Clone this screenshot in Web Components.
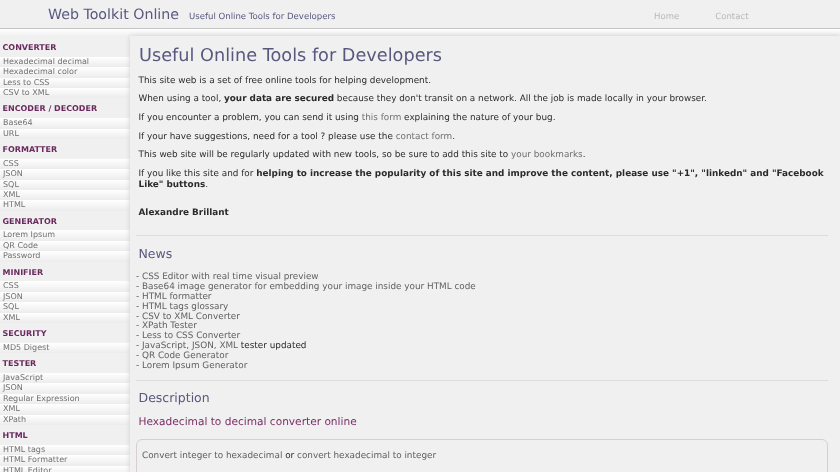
<!DOCTYPE html>
<html>
<head>
<meta charset="utf-8">
<title>Web Toolkit Online</title>
<style>
html,body{margin:0;padding:0;height:472px;overflow:hidden;background:#f0f0f0;font-family:"DejaVu Sans",sans-serif;text-rendering:geometricPrecision;}
body{filter:blur(.3px);}
</style>
</head>
<body>
<site-header></site-header>
<page-layout>
  <side-menu slot="side">
    <menu-group title="CONVERTER" items="Hexadecimal decimal|Hexadecimal color|Less to CSS|CSV to XML"></menu-group>
    <menu-group title="ENCODER / DECODER" items="Base64|URL"></menu-group>
    <menu-group title="FORMATTER" items="CSS|JSON|SQL|XML|HTML"></menu-group>
    <menu-group title="GENERATOR" items="Lorem Ipsum|QR Code|Password"></menu-group>
    <menu-group title="MINIFIER" items="CSS|JSON|SQL|XML"></menu-group>
    <menu-group title="SECURITY" items="MD5 Digest"></menu-group>
    <menu-group title="TESTER" items="JavaScript|JSON|Regular Expression|XML|XPath"></menu-group>
    <menu-group title="HTML" items="HTML tags|HTML Formatter|HTML Editor"></menu-group>
  </side-menu>
  <main-panel></main-panel>
</page-layout>
<script>
//header bar
var header_tpl = document.createElement("template");
header_tpl.innerHTML = `
<style>
:host{display:flex;align-items:center;height:28px;border-bottom:1px solid #c4c4c4;background:#f0f0f0;}
.brand{font-size:14.2px;color:#58587f;margin-left:48px;position:relative;top:.5px;}
.tag{font-size:8.55px;color:#58587f;margin-left:10px;position:relative;top:2.5px;}
nav{margin-left:auto;display:flex;gap:36px;margin-right:91.5px;font-size:8.55px;color:#b8b8b8;position:relative;top:3px;}
</style>
<span class="brand">Web Toolkit Online</span>
<span class="tag">Useful Online Tools for Developers</span>
<nav><span>Home</span><span>Contact</span></nav>
`;
class SiteHeader extends HTMLElement {
  constructor(){
    super();
    this.attachShadow({mode:"open"}).appendChild(header_tpl.content.cloneNode(true));
  }
}
customElements.define("site-header", SiteHeader);

//two columns, with the light band under the header
var layout_tpl = document.createElement("template");
layout_tpl.innerHTML = `
<style>
:host{display:flex;align-items:flex-start;padding-top:7px;background:linear-gradient(#ffffff,#f0f0f0) no-repeat 0 0/100% 7px;}
.side{width:130px;flex:none;}
.main{flex:1;min-width:0;}
</style>
<div class="side"><slot name="side"></slot></div>
<div class="main"><slot></slot></div>
`;
class PageLayout extends HTMLElement {
  constructor(){
    super();
    this.attachShadow({mode:"open"}).appendChild(layout_tpl.content.cloneNode(true));
  }
}
customElements.define("page-layout", PageLayout);

var side_tpl = document.createElement("template");
side_tpl.innerHTML = `
<style>
:host{display:block;padding-top:6px;}
</style>
<slot></slot>
`;
class SideMenu extends HTMLElement {
  constructor(){
    super();
    this.attachShadow({mode:"open"}).appendChild(side_tpl.content.cloneNode(true));
  }
}
customElements.define("side-menu", SideMenu);

var group_tpl = document.createElement("template");
group_tpl.innerHTML = `
<style>
:host{display:block;margin-bottom:5px;}
h4{margin:0;padding:0 0 3.8px 2.5px;font-size:8px;line-height:11px;font-weight:bold;color:#6b2a5e;}
a{display:block;height:10.4px;line-height:10.4px;padding-left:3px;font-size:8px;color:#707070;background:linear-gradient(#ffffff,#ececec);white-space:nowrap;}
</style>
<h4></h4>
<div class="items"></div>
`;
class MenuGroup extends HTMLElement {
  constructor(){
    super();
    this.attachShadow({mode:"open"}).appendChild(group_tpl.content.cloneNode(true));
  }
  connectedCallback(){
    this.shadowRoot.querySelector("h4").textContent = this.getAttribute("title");
    var box = this.shadowRoot.querySelector(".items");
    box.innerHTML = "";
    this.getAttribute("items").split("|").forEach(function(t){
      var a = document.createElement("a");
      a.textContent = t;
      box.appendChild(a);
    });
  }
}
customElements.define("menu-group", MenuGroup);

var main_tpl = document.createElement("template");
main_tpl.innerHTML = `
<style>
:host{display:block;height:440px;overflow:hidden;box-shadow:0 0 5px #cfcfcf;background:#f0f0f0;padding:0 12px 0 6px;font-size:8.86px;color:#2b2b2b;line-height:11px;}
h1{margin:9px 0 8.8px 3px;font-size:17.7px;line-height:22px;font-weight:normal;color:#58587f;}
p{margin:0 0 7.6px 2.5px;}
.link{color:#6f6f6f;}
.sign{margin-top:17px;margin-bottom:16.5px;}
hr{border:0;border-top:1px solid #dcdcdc;margin:0;}
h2{margin:10px 0 11px 2.5px;font-size:12.5px;line-height:16px;font-weight:normal;color:#58587f;}
h2.desc{margin:9.5px 0 8.5px 2.5px;}
.news{color:#5f5f5f;line-height:9.83px;}
.news b{font-weight:normal;color:#2b2b2b;}
.news hr{margin:8px 0 0;}
h3{margin:0 0 0 2.5px;font-size:10.6px;line-height:14px;font-weight:normal;color:#7a2f66;}
.box{margin-top:10px;border:1px solid #d9ccd4;border-radius:6px;padding:11.5px 5px;height:60px;color:#5f5f5f;}
.box b{font-weight:normal;color:#2b2b2b;}
</style>
<h1>Useful Online Tools for Developers</h1>
<p>This site web is a set of free online tools for helping development.</p>
<p>When using a tool, <strong>your data are secured</strong> because they don't transit on a network. All the job is made locally in your browser.</p>
<p>If you encounter a problem, you can send it using <span class="link">this form</span> explaining the nature of your bug.</p>
<p>If your have suggestions, need for a tool ? please use the <span class="link">contact form</span>.</p>
<p>This web site will be regularly updated with new tools, so be sure to add this site to <span class="link">your bookmarks</span>.</p>
<p>If you like this site and for <strong>helping to increase the popularity of this site and improve the content, please use "+1", "linkedn" and "Facebook Like" buttons</strong>.</p>
<p class="sign"><strong>Alexandre Brillant</strong></p>
<hr>
<h2>News</h2>
<div class="news">
- CSS Editor with real time visual preview<br>
- Base64 image generator for embedding your image inside your HTML code<br>
- HTML formatter<br>
- HTML tags glossary<br>
- CSV to XML Converter<br>
- XPath Tester<br>
- Less to CSS Converter<br>
- JavaScript, JSON, XML <b>tester updated</b><br>
- QR Code Generator<br>
- Lorem Ipsum Generator
<hr>
</div>
<h2 class="desc">Description</h2>
<h3>Hexadecimal to decimal converter online</h3>
<div class="box">Convert integer to hexadecimal <b>or</b> convert hexadecimal to integer</div>
`;
class MainPanel extends HTMLElement {
  constructor(){
    super();
    this.attachShadow({mode:"open"}).appendChild(main_tpl.content.cloneNode(true));
  }
}
customElements.define("main-panel", MainPanel);
</script>
</body>
</html>
